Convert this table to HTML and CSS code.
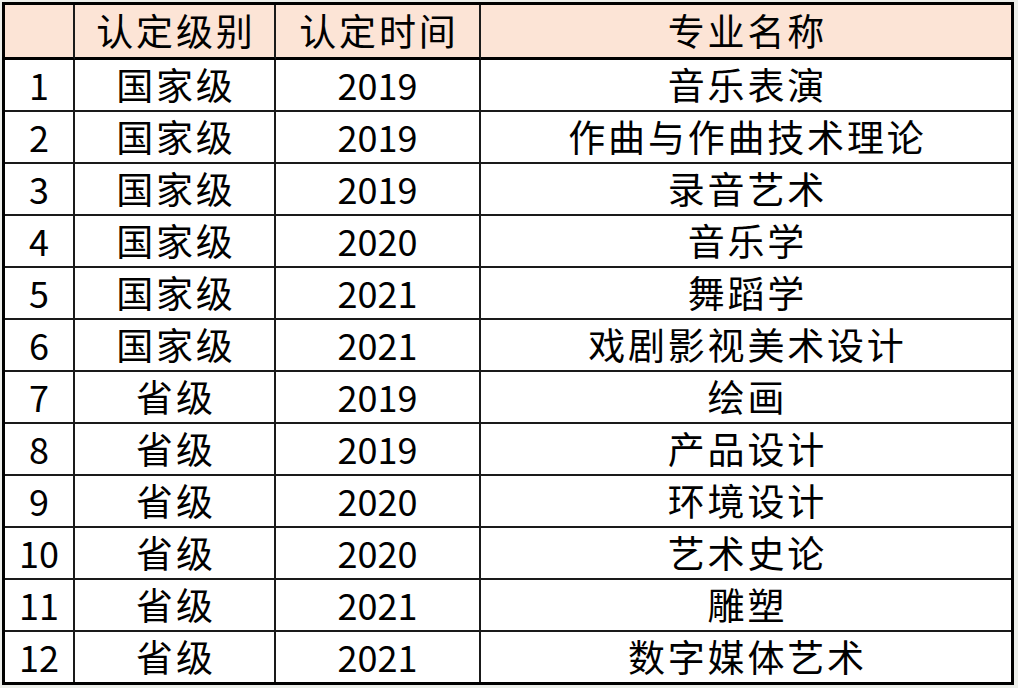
FILE: index.html
```html
<!DOCTYPE html>
<html lang="zh-CN">
<head>
<meta charset="utf-8">
<title>专业认定</title>
<link rel="stylesheet" href="styles.css">
</head>
<body>
<div class="page">
<table class="grid">
  <colgroup>
    <col class="c-no"><col class="c-level"><col class="c-year"><col class="c-name">
  </colgroup>
  <thead>
    <tr><th></th><th class="zh">认定级别</th><th class="zh">认定时间</th><th class="zh">专业名称</th></tr>
  </thead>
  <tbody>
    <tr><td>1</td><td class="zh">国家级</td><td>2019</td><td class="zh">音乐表演</td></tr>
    <tr><td>2</td><td class="zh">国家级</td><td>2019</td><td class="zh">作曲与作曲技术理论</td></tr>
    <tr><td>3</td><td class="zh">国家级</td><td>2019</td><td class="zh">录音艺术</td></tr>
    <tr><td>4</td><td class="zh">国家级</td><td>2020</td><td class="zh">音乐学</td></tr>
    <tr><td>5</td><td class="zh">国家级</td><td>2021</td><td class="zh">舞蹈学</td></tr>
    <tr><td>6</td><td class="zh">国家级</td><td>2021</td><td class="zh">戏剧影视美术设计</td></tr>
    <tr><td>7</td><td class="zh">省级</td><td>2019</td><td class="zh">绘画</td></tr>
    <tr><td>8</td><td class="zh">省级</td><td>2019</td><td class="zh">产品设计</td></tr>
    <tr><td>9</td><td class="zh">省级</td><td>2020</td><td class="zh">环境设计</td></tr>
    <tr><td>10</td><td class="zh">省级</td><td>2020</td><td class="zh">艺术史论</td></tr>
    <tr><td>11</td><td class="zh">省级</td><td>2021</td><td class="zh">雕塑</td></tr>
    <tr><td>12</td><td class="zh">省级</td><td>2021</td><td class="zh">数字媒体艺术</td></tr>
  </tbody>
</table>
</div>
</body>
</html>
```
FILE: styles.css
```css
html, body {
  margin: 0;
  padding: 0;
  background: #eceeea;
}
.page {
  padding: 2px 0 0 2px;
  width: 1018px;
  height: 688px;
  box-sizing: border-box;
}
.grid {
  box-sizing: border-box;
  width: 1012px;
  border: 3px solid #000;
  border-spacing: 0;
  border-collapse: separate;
  table-layout: fixed;
  background: #fff;
  font-family: "Noto Sans CJK SC", "Noto Sans", sans-serif;
  font-size: 36px;
  font-weight: 400;
  color: #000;
}
.c-no { width: 70px; }
.c-level { width: 201px; }
.c-year { width: 205px; }
.c-name { width: 530px; }
.grid th, .grid td {
  box-sizing: border-box;
  padding: 0 0 2px 0;
  text-align: center;
  vertical-align: middle;
  font-weight: 400;
  line-height: 40px;
  border-right: 2px solid #1a1a1a;
  border-bottom: 2px solid #1a1a1a;
  height: 52px;
}
.grid th:last-child, .grid td:last-child {
  border-right: none;
}
.grid tbody tr:last-child td {
  border-bottom: none;
  height: 50px;
}
.grid th {
  background: #fce4d6;
  border-bottom: 3px solid #000;
  height: 55px;
}
.zh {
  font-size: 37px;
  letter-spacing: 2.8px;
  text-indent: 2.8px;
}
```
